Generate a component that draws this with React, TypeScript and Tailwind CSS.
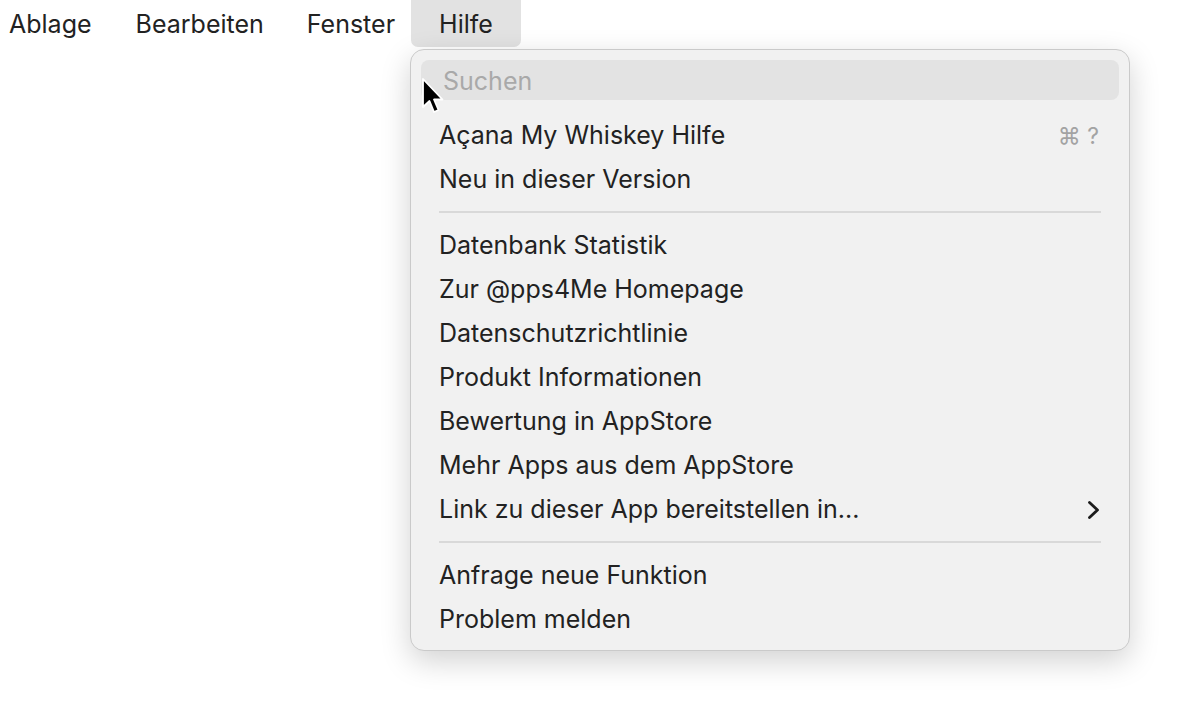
const groups: string[][] = [
  ["Açana My Whiskey Hilfe", "Neu in dieser Version"],
  [
    "Datenbank Statistik",
    "Zur @pps4Me Homepage",
    "Datenschutzrichtlinie",
    "Produkt Informationen",
    "Bewertung in AppStore",
    "Mehr Apps aus dem AppStore",
    "Link zu dieser App bereitstellen in...",
  ],
  ["Anfrage neue Funktion", "Problem melden"],
];

function MenuRow({ label }: { label: string }) {
  return (
    <div className="flex h-[44px] items-center justify-between pl-[28px] pr-[30px] pt-[2px]">
      <span>{label}</span>
      {label === "Açana My Whiskey Hilfe" && (
        <span className="text-[23px] text-[#a3a3a3]">⌘ ?</span>
      )}
      {label.startsWith("Link zu") && (
        <svg width="14" height="20" viewBox="0 0 14 20" className="translate-x-[2px]">
          <path d="M2.5 2.5 L10.5 10 L2.5 17.5" fill="none" stroke="#1c1c1c" strokeWidth="2.8" strokeLinecap="round" strokeLinejoin="round" />
        </svg>
      )}
    </div>
  );
}

export default function App() {
  return (
    <div
      className="relative h-[728px] w-[1200px] overflow-hidden bg-white text-[25px] text-[#222222]"
      style={{ fontFamily: "Inter, 'Liberation Sans', sans-serif" }}
    >
      <div className="flex h-[47px] items-center pl-[9px] pt-[2px]">
        <span>Ablage</span>
        <span className="ml-[44px]">Bearbeiten</span>
        <span className="ml-[43px]">Fenster</span>
        <span className="ml-[16px] -mt-[2px] flex h-[47px] items-center rounded-b-[7px] bg-[#e2e2e2] px-[28px] pt-[2px]">Hilfe</span>
      </div>

      <div className="absolute left-[410px] top-[49px] w-[720px] rounded-[14px] border border-[#cacaca] bg-[#f1f1f1] pb-[9px] pt-[10px] shadow-[0_10px_30px_rgba(0,0,0,0.18)]">
        <div className="mx-[10px] flex h-[40px] items-center rounded-[8px] bg-[#e3e3e3] pl-[22px] pt-[3px] text-[#a9a9a9]">
          Suchen
        </div>
        <div className="mt-[13px]">
          {groups.map((g, i) => (
            <div key={i}>
              {i > 0 && (
                <div className="flex h-[22px] items-center px-[28px]">
                  <div className="h-[2px] w-full bg-[#d9d9d9]" />
                </div>
              )}
              {g.map((label) => (
                <MenuRow key={label} label={label} />
              ))}
            </div>
          ))}
        </div>
      </div>

      <svg className="absolute left-[421px] top-[78px]" width="24" height="38" viewBox="0 0 24 38">
        <path d="M2 1 L2 29 L8.5 23 L13 34 L17.5 32 L13 21.5 L21.5 21.5 Z" fill="#000" stroke="#fff" strokeWidth="1.8" strokeLinejoin="round" />
      </svg>
    </div>
  );
}
